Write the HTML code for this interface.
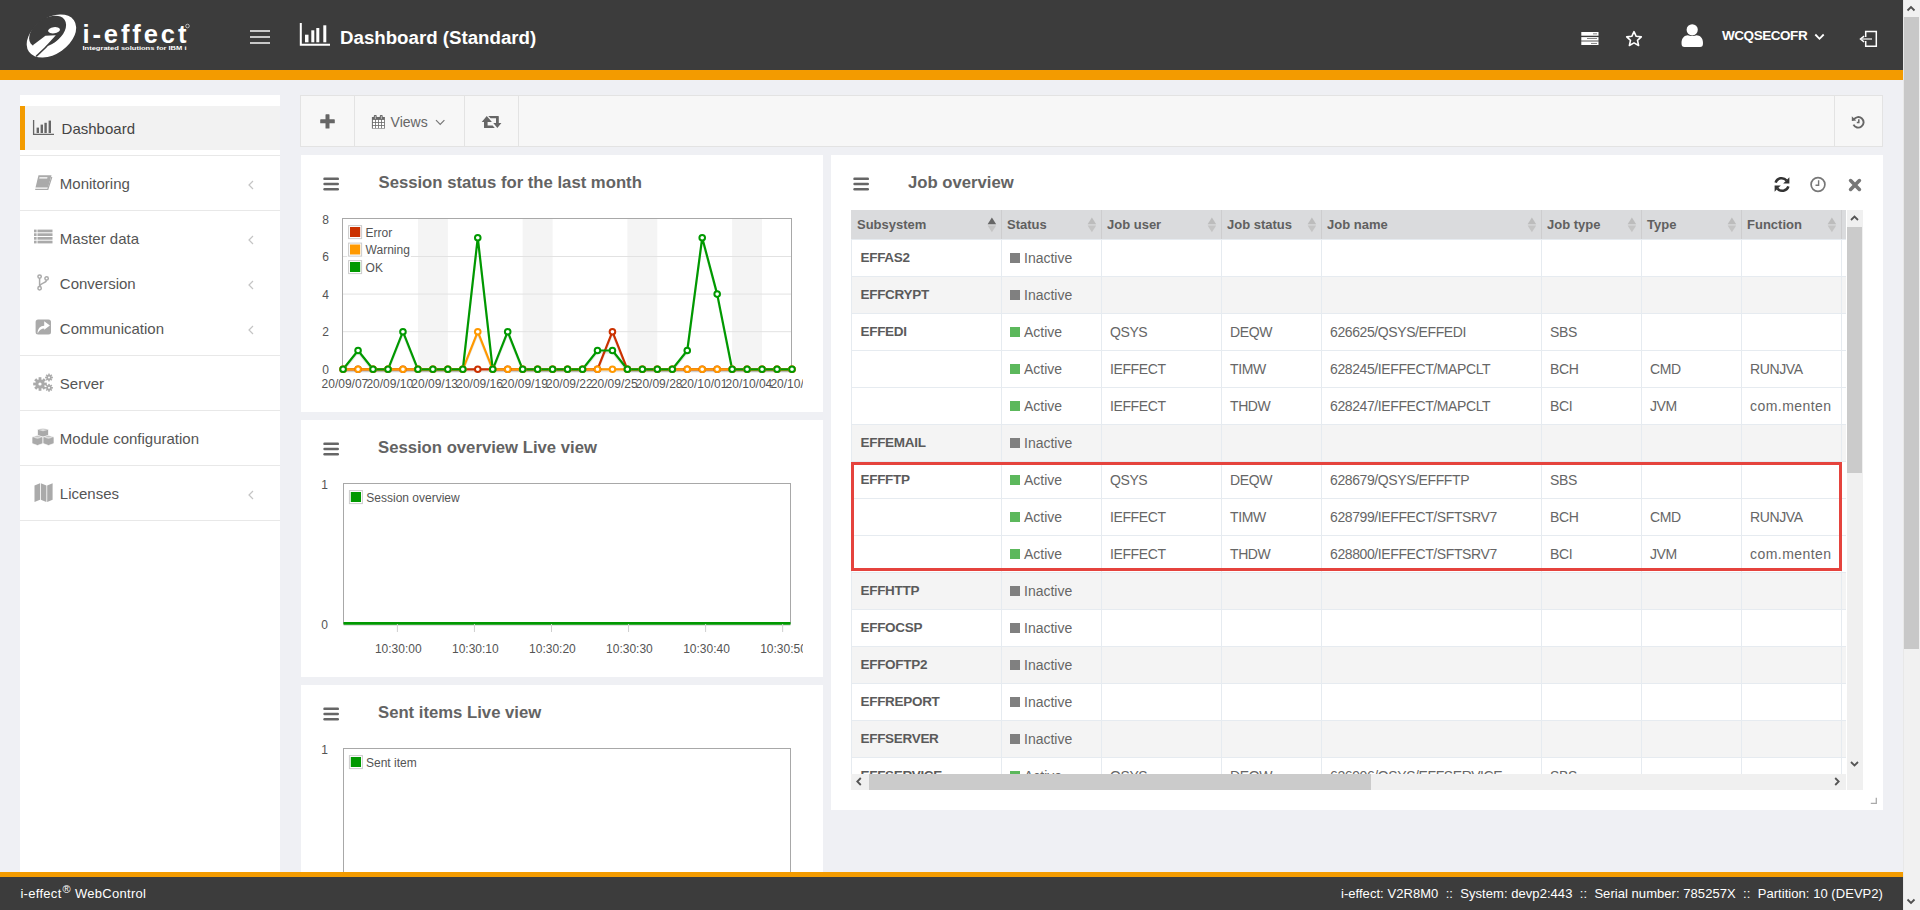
<!DOCTYPE html>
<html><head><meta charset="utf-8"><title>i-effect WebControl</title>
<style>
*{box-sizing:border-box;margin:0;padding:0}
html,body{width:1920px;height:910px;overflow:hidden}
body{background:#eff0f4;font-family:"Liberation Sans",sans-serif;position:relative;color:#555}
.a{position:absolute}
#hdr{left:0;top:0;width:1903px;height:70px;background:#3c3c3c}
#org{left:0;top:70px;width:1903px;height:10px;background:#f39b00}
#title{left:340px;top:28.6px;font-weight:bold;font-size:18.7px;line-height:1;color:#fff;white-space:nowrap}
#user{left:1722px;top:29.1px;font-weight:bold;font-size:13.5px;line-height:1;letter-spacing:-0.45px;color:#fff;white-space:nowrap}
#psb{left:1903px;top:0;width:17px;height:910px;background:#f1f1f1;border-left:1px solid #e8e8e8}
#psbt{left:1904px;top:17px;width:15px;height:632px;background:#c8c8c8}
#side{left:20px;top:95px;width:260px;height:800px;background:#fff}
.si{position:absolute;left:39.8px;font-size:15px;line-height:1;color:#555;white-space:nowrap}
.sep{position:absolute;left:0;width:260px;height:1px;background:#e8e8e8}
.chv{position:absolute;left:227px}
#tb{left:300px;top:95px;width:1583px;height:52px;background:#f7f7f7;border:1px solid #e3e3e3}
.tbd{position:absolute;top:0;width:1px;height:50px;background:#e3e3e3}
.pn{position:absolute;background:#fff}
.ptitle{position:absolute;font-weight:bold;font-size:16.7px;line-height:1;color:#636363;white-space:nowrap}
.ham{position:absolute;width:16px;height:13px}
.ham i{position:absolute;left:0;width:16px;height:2.5px;border-radius:1.2px;background:#666}
#forg{left:0;top:872px;width:1903px;height:5px;background:#f39b00}
#fdark{left:0;top:877px;width:1903px;height:33px;background:#3c3c3c}
#fl{left:20.4px;top:886.7px;font-size:13px;line-height:1;color:#fff;white-space:nowrap;letter-spacing:0.3px}
#fl sup{font-size:11px;vertical-align:0;position:relative;top:-5px;margin-left:1px}
#fr{right:37px;top:886.7px;font-size:13px;line-height:1;color:#fff;white-space:nowrap;letter-spacing:0.05px}
.th{position:absolute;top:8px;font-weight:bold;font-size:13px;line-height:1;color:#606060;white-space:nowrap}
.td{position:absolute;font-size:14px;line-height:1;color:#666;white-space:nowrap;letter-spacing:-0.4px}
.tds{position:absolute;font-size:13.5px;font-weight:bold;line-height:1;color:#5a5a5a;white-space:nowrap;letter-spacing:-0.3px}
</style></head><body>
<!-- HEADER -->
<div id="hdr" class="a"></div>
<div id="org" class="a"></div>
<svg class="a" style="left:22px;top:10px" width="60" height="52" viewBox="0 0 1050 910">
  <ellipse cx="515" cy="455" rx="480" ry="315" transform="rotate(-35 515 455)" fill="#fff"/>
  <ellipse cx="448" cy="378" rx="362" ry="226" transform="rotate(-35 448 378)" fill="#3c3c3c"/>
  <path d="M195 612 L410 452 L592 440 L262 800 L190 780 Z" fill="#fff"/>
  <path d="M248 812 L440 630" stroke="#3c3c3c" stroke-width="26"/>
  <ellipse cx="560" cy="355" rx="105" ry="54" transform="rotate(-8 560 355)" fill="#fff"/>
</svg>
<svg class="a" style="left:80px;top:18px" width="115" height="36">
  <text x="2.4" y="24.8" font-family="Liberation Sans" font-weight="bold" font-size="25.5" fill="#fff" textLength="104" lengthAdjust="spacing">i-effect</text>
  <text x="2.5" y="32.3" font-family="Liberation Sans" font-weight="bold" font-size="6.2" fill="#fff" textLength="104" lengthAdjust="spacingAndGlyphs">Integrated solutions for IBM i</text>
  <circle cx="107.5" cy="8" r="1.8" fill="none" stroke="#fff" stroke-width="0.6"/>
</svg>
<!-- hamburger -->
<div class="a" style="left:250px;top:30px;width:20px;height:2px;background:#c8c8c8"></div>
<div class="a" style="left:250px;top:36px;width:20px;height:2px;background:#c8c8c8"></div>
<div class="a" style="left:250px;top:42px;width:20px;height:2px;background:#c8c8c8"></div>
<!-- chart icon -->
<svg class="a" style="left:299px;top:22px" width="33" height="26" viewBox="0 0 33 26">
  <path d="M1.8 1 V22.8 H31" stroke="#fff" stroke-width="2" fill="none"/>
  <rect x="6" y="12.7" width="3.5" height="7.6" fill="#fff"/>
  <rect x="12.3" y="8.3" width="3" height="12" fill="#fff"/>
  <rect x="17.3" y="6" width="3" height="14.3" fill="#fff"/>
  <rect x="24.3" y="3.3" width="3" height="17" fill="#fff"/>
</svg>
<div id="title" class="a">Dashboard (Standard)</div>
<!-- server icon -->
<svg class="a" style="left:1581px;top:31px" width="19" height="15" viewBox="0 0 19 15">
  <rect x="0.3" y="1" width="17.2" height="3.7" fill="#fff"/>
  <rect x="0.3" y="6.1" width="17.2" height="2.9" fill="#fff"/>
  <rect x="0.3" y="9" width="17.2" height="1.8" fill="#aaa"/>
  <rect x="0.3" y="10.8" width="17.2" height="3.2" fill="#fff"/>
  <rect x="12" y="2.4" width="4" height="0.9" fill="#777"/>
  <rect x="6" y="7.1" width="10" height="0.9" fill="#777"/>
  <rect x="10" y="11.95" width="6" height="0.9" fill="#777"/>
</svg>
<!-- star -->
<svg class="a" style="left:1625px;top:30px" width="18" height="18" viewBox="0 0 18 18">
  <path d="M9 1.6 L11.2 6.3 L16.3 6.9 L12.5 10.3 L13.6 15.5 L9 12.9 L4.4 15.5 L5.5 10.3 L1.7 6.9 L6.8 6.3 Z" fill="none" stroke="#fff" stroke-width="1.6" stroke-linejoin="round"/>
</svg>
<!-- user -->
<svg class="a" style="left:1680px;top:23px" width="25" height="25" viewBox="0 0 25 25">
  <circle cx="12.2" cy="6.8" r="5.6" fill="#fff"/>
  <path d="M1.5 20 C1.5 14.5 4.8 12.4 7.8 12.2 C9.5 13.3 14.8 13.3 16.6 12.2 C19.8 12.4 23 14.5 23 20 C23 23 22 24 20 24 L4.5 24 C2.5 24 1.5 23 1.5 20 Z" fill="#fff"/>
</svg>
<div id="user" class="a">WCQSECOFR</div>
<svg class="a" style="left:1814px;top:33px" width="11" height="8" viewBox="0 0 11 8">
  <path d="M1.3 1.5 L5.5 5.8 L9.7 1.5" stroke="#fff" stroke-width="1.8" fill="none"/>
</svg>
<!-- sign-in icon -->
<svg class="a" style="left:1859px;top:30px" width="20" height="18" viewBox="0 0 20 18">
  <path d="M6.7 6.9 V1.6 H17.3 V16.3 H6.7 V11.1" stroke="#fff" stroke-width="1.5" fill="none"/>
  <path d="M3 9 H13" stroke="#ddd" stroke-width="1.4"/>
  <path d="M5.1 6.1 L1.5 9 L5.1 12" stroke="#fff" stroke-width="1.5" fill="none"/>
</svg>
<!-- SIDEBAR -->
<div id="side" class="a">
  <div class="a" style="left:0;top:11px;width:260px;height:44px;background:#f2f2f2"></div>
  <div class="a" style="left:0;top:11px;width:5px;height:44px;background:#f39b00"></div>
  <div class="sep" style="top:60px"></div>
  <div class="sep" style="top:115px"></div>
  <div class="sep" style="top:260px"></div>
  <div class="sep" style="top:315px"></div>
  <div class="sep" style="top:370px"></div>
  <div class="sep" style="top:425px"></div>
  <div class="si" style="top:26.1px;left:41.6px;color:#444">Dashboard</div>
  <div class="si" style="top:81.3px">Monitoring</div>
  <div class="si" style="top:136.3px">Master data</div>
  <div class="si" style="top:181.3px">Conversion</div>
  <div class="si" style="top:226.3px">Communication</div>
  <div class="si" style="top:281.3px">Server</div>
  <div class="si" style="top:336.3px">Module configuration</div>
  <div class="si" style="top:391.3px">Licenses</div>
  <svg class="chv" style="top:85px" width="8" height="10"><path d="M6 1 L2 5 L6 9" stroke="#c4c4c4" stroke-width="1.2" fill="none"/></svg>
  <svg class="chv" style="top:140px" width="8" height="10"><path d="M6 1 L2 5 L6 9" stroke="#c4c4c4" stroke-width="1.2" fill="none"/></svg>
  <svg class="chv" style="top:185px" width="8" height="10"><path d="M6 1 L2 5 L6 9" stroke="#c4c4c4" stroke-width="1.2" fill="none"/></svg>
  <svg class="chv" style="top:230px" width="8" height="10"><path d="M6 1 L2 5 L6 9" stroke="#c4c4c4" stroke-width="1.2" fill="none"/></svg>
  <svg class="chv" style="top:395px" width="8" height="10"><path d="M6 1 L2 5 L6 9" stroke="#c4c4c4" stroke-width="1.2" fill="none"/></svg>
</div>
<!-- sidebar icons -->
<svg class="a" style="left:32px;top:119px" width="23" height="17" viewBox="0 0 23 17">
  <path d="M1.6 1 V15.4 H22" stroke="#666" stroke-width="1.3" fill="none"/>
  <rect x="4.6" y="8.6" width="2.4" height="5.4" fill="#666"/>
  <rect x="8.6" y="5.6" width="2.4" height="8.4" fill="#666"/>
  <rect x="12.4" y="3.8" width="2.4" height="10.2" fill="#666"/>
  <rect x="16.6" y="1.6" width="2.4" height="12.4" fill="#666"/>
</svg>
<svg class="a" style="left:34px;top:174px" width="19" height="17" viewBox="0 0 19 17">
  <path d="M4.5 1.2 H17.5 L14 13.5 H1.5 L4.5 1.2 Z" fill="#aaa"/>
  <path d="M1.2 15.3 H13.8 L17.8 3" stroke="#aaa" stroke-width="1.2" fill="none"/>
  <rect x="6.3" y="3.3" width="8" height="1.1" fill="#fff" transform="skewX(-14)"/>
</svg>
<svg class="a" style="left:33px;top:229px" width="21" height="16" viewBox="0 0 21 16">
  <g fill="#aaa"><rect x="1" y="0.6" width="2.6" height="2.7"/><rect x="4.5" y="0.6" width="15" height="2.7"/>
  <rect x="1" y="4.3" width="2.6" height="2.7"/><rect x="4.5" y="4.3" width="15" height="2.7"/>
  <rect x="1" y="8" width="2.6" height="2.7"/><rect x="4.5" y="8" width="15" height="2.7"/>
  <rect x="1" y="11.7" width="2.6" height="2.7"/><rect x="4.5" y="11.7" width="15" height="2.7"/></g>
</svg>
<svg class="a" style="left:37px;top:274px" width="13" height="17" viewBox="0 0 13 17">
  <g stroke="#aaa" stroke-width="1.5" fill="none"><circle cx="2.6" cy="2.6" r="1.7"/><circle cx="9.6" cy="4.4" r="1.7"/><circle cx="2.6" cy="14.2" r="1.7"/>
  <path d="M2.6 4.3 V12.5"/><path d="M9.5 6.1 C9.3 9.4 3.2 8.8 2.8 12"/></g>
</svg>
<svg class="a" style="left:35px;top:319px" width="17" height="17" viewBox="0 0 17 17">
  <rect x="0.6" y="0.6" width="15.4" height="15" rx="2.5" fill="#aaa"/>
  <path d="M2.6 14.6 C2.6 9.6 5.2 6.8 9.2 6.8 V2.2 L14.9 6.4 L9.2 10.8 V9.4 C6.6 9.4 4.2 10.9 2.6 14.6 Z" fill="#fff"/>
</svg>
<svg class="a" style="left:33px;top:373px" width="21" height="19" viewBox="0 0 21 19">
  <g fill="#aaa">
    <circle cx="7" cy="11" r="4.6"/>
    <g transform="translate(7 11)"><rect x="-1.4" y="-6.8" width="2.8" height="13.6"/><rect x="-6.8" y="-1.4" width="13.6" height="2.8"/><rect x="-1.4" y="-6.8" width="2.8" height="13.6" transform="rotate(45)"/><rect x="-1.4" y="-6.8" width="2.8" height="13.6" transform="rotate(-45)"/></g>
    <g transform="translate(16 4.5)"><circle r="2.6"/><rect x="-0.8" y="-3.9" width="1.6" height="7.8"/><rect x="-3.9" y="-0.8" width="7.8" height="1.6"/><rect x="-0.8" y="-3.9" width="1.6" height="7.8" transform="rotate(45)"/><rect x="-0.8" y="-3.9" width="1.6" height="7.8" transform="rotate(-45)"/></g>
    <g transform="translate(16 14.8)"><circle r="2.6"/><rect x="-0.8" y="-3.9" width="1.6" height="7.8"/><rect x="-3.9" y="-0.8" width="7.8" height="1.6"/><rect x="-0.8" y="-3.9" width="1.6" height="7.8" transform="rotate(45)"/><rect x="-0.8" y="-3.9" width="1.6" height="7.8" transform="rotate(-45)"/></g>
  </g>
  <circle cx="7" cy="11" r="1.6" fill="#fff"/><circle cx="16" cy="4.5" r="1" fill="#fff"/><circle cx="16" cy="14.8" r="1" fill="#fff"/>
</svg>
<svg class="a" style="left:31px;top:428px" width="24" height="20" viewBox="0 0 24 20">
  <g fill="#aaa" stroke="#fff" stroke-width="0.7">
    <path d="M6.5 1.5 L12 0.3 L17.5 1.5 V7.5 L12 9.2 L6.5 7.5 Z"/>
    <path d="M1 9 L6.5 7.6 L12 9 V15.5 L6.5 17.5 L1 15.5 Z"/>
    <path d="M12 9 L17.5 7.6 L23 9 V15.5 L17.5 17.5 L12 15.5 Z"/>
  </g>
  <g fill="#ddd"><path d="M7.5 2 L12 1 L16.5 2 L12 3.3 Z"/><path d="M2 9.5 L6.5 8.5 L11 9.5 L6.5 10.8 Z"/><path d="M13 9.5 L17.5 8.5 L22 9.5 L17.5 10.8 Z"/></g>
</svg>
<svg class="a" style="left:34px;top:482px" width="20" height="21" viewBox="0 0 20 21">
  <g fill="#aaa"><path d="M0.5 3.5 L6 1.2 V17.8 L0.5 20 Z"/><path d="M6.8 1.2 L12.4 3.5 V20 L6.8 17.8 Z"/><path d="M13.2 3.5 L18.6 1.2 V17.8 L13.2 20 Z"/></g>
</svg>
<!-- TOOLBAR -->
<div id="tb" class="a">
  <div class="tbd" style="left:53px"></div>
  <div class="tbd" style="left:163px"></div>
  <div class="tbd" style="left:217px"></div>
  <div class="tbd" style="left:1533px"></div>
</div>
<svg class="a" style="left:320px;top:113.5px" width="15" height="15" viewBox="0 0 15 15">
  <rect x="5.5" y="0.3" width="4" height="14.2" rx="0.6" fill="#666"/><rect x="0.2" y="5.3" width="14.6" height="4" rx="0.6" fill="#666"/>
</svg>
<svg class="a" style="left:371px;top:114px" width="15" height="16" viewBox="0 0 15 16">
  <rect x="0.9" y="3" width="13" height="11.6" fill="#6a6a6a"/>
  <rect x="2.8" y="1" width="2.9" height="4.2" rx="0.9" fill="#6a6a6a"/>
  <rect x="8.8" y="1" width="2.9" height="4.2" rx="0.9" fill="#6a6a6a"/>
  <rect x="3.9" y="2" width="0.8" height="3" fill="#ccc"/><rect x="9.9" y="2" width="0.8" height="3" fill="#ccc"/>
  <g fill="#fff"><rect x="1.9" y="5.9" width="2.2" height="2.2"/><rect x="4.9" y="5.9" width="2.2" height="2.2"/><rect x="7.9" y="5.9" width="2.2" height="2.2"/><rect x="10.9" y="5.9" width="2.2" height="2.2"/><rect x="1.9" y="8.9" width="2.2" height="2.2"/><rect x="4.9" y="8.9" width="2.2" height="2.2"/><rect x="7.9" y="8.9" width="2.2" height="2.2"/><rect x="10.9" y="8.9" width="2.2" height="2.2"/><rect x="1.9" y="11.9" width="2.2" height="2.2"/><rect x="4.9" y="11.9" width="2.2" height="2.2"/><rect x="7.9" y="11.9" width="2.2" height="2.2"/><rect x="10.9" y="11.9" width="2.2" height="2.2"/></g>
</svg>
<div class="a" style="left:390.6px;top:115.1px;font-size:14px;line-height:1;color:#666;white-space:nowrap">Views</div>
<svg class="a" style="left:435px;top:119px" width="11" height="7" viewBox="0 0 11 7"><path d="M1 1.2 L5.2 5.4 L9.4 1.2" stroke="#777" stroke-width="1.2" fill="none"/></svg>
<svg class="a" style="left:481px;top:115px" width="21" height="14" viewBox="0 0 21 14">
  <path d="M0.7 7 L5.75 0.9 L10.9 7 H6.6 V10.6 H11.6 L13.8 13 H3.6 C3.2 13 3 12.8 3 12.4 V7 Z" fill="#666"/>
  <path d="M20.4 8.1 L16.35 13 L12.3 8.1 H15 V3.3 H9.6 L7.2 0.9 H17.3 C17.6 0.9 17.8 1.1 17.8 1.4 V8.1 Z" fill="#666"/>
</svg>
<svg class="a" style="left:1851px;top:115px" width="15" height="14" viewBox="0 0 15 14">
  <path d="M2.8 4.5 A5.3 5.3 0 1 1 2.5 9.6" stroke="#666" stroke-width="1.9" fill="none"/>
  <path d="M0.8 1.3 L5.2 5.4 L0.8 5.9 Z" fill="#666"/>
  <path d="M7.8 4.2 V7.6 H5.8" stroke="#666" stroke-width="1.5" fill="none"/>
</svg>

<!-- PANELS -->
<div class="pn" style="left:301px;top:155px;width:522px;height:257px"></div>
<div class="pn" style="left:301px;top:420px;width:522px;height:257px"></div>
<div class="pn" style="left:301px;top:685px;width:522px;height:200px"></div>
<div class="pn" style="left:831px;top:155px;width:1052px;height:655px"></div>
<svg class="a" style="left:323px;top:177px" width="17" height="14" viewBox="0 0 17 14"><g fill="#666"><rect x="0.3" y="0.5" width="15.7" height="2.6" rx="1.2"/><rect x="0.3" y="5.7" width="15.7" height="2.6" rx="1.2"/><rect x="0.3" y="10.9" width="15.7" height="2.6" rx="1.2"/></g></svg>
<svg class="a" style="left:323px;top:442px" width="17" height="14" viewBox="0 0 17 14"><g fill="#666"><rect x="0.3" y="0.5" width="15.7" height="2.6" rx="1.2"/><rect x="0.3" y="5.7" width="15.7" height="2.6" rx="1.2"/><rect x="0.3" y="10.9" width="15.7" height="2.6" rx="1.2"/></g></svg>
<svg class="a" style="left:323px;top:707px" width="17" height="14" viewBox="0 0 17 14"><g fill="#666"><rect x="0.3" y="0.5" width="15.7" height="2.6" rx="1.2"/><rect x="0.3" y="5.7" width="15.7" height="2.6" rx="1.2"/><rect x="0.3" y="10.9" width="15.7" height="2.6" rx="1.2"/></g></svg>
<svg class="a" style="left:853px;top:177px" width="17" height="14" viewBox="0 0 17 14"><g fill="#666"><rect x="0.3" y="0.5" width="15.7" height="2.6" rx="1.2"/><rect x="0.3" y="5.7" width="15.7" height="2.6" rx="1.2"/><rect x="0.3" y="10.9" width="15.7" height="2.6" rx="1.2"/></g></svg>
<div class="ptitle" style="left:378.5px;top:174.8px">Session status for the last month</div>
<div class="ptitle" style="left:378px;top:439.8px">Session overview Live view</div>
<div class="ptitle" style="left:378px;top:704.8px">Sent items Live view</div>
<div class="ptitle" style="left:908px;top:174.8px">Job overview</div>
<!-- job overview icons -->
<svg class="a" style="left:1773px;top:176px" width="18" height="17" viewBox="0 0 18 17">
  <path d="M2.6 6.6 A6.3 6.3 0 0 1 13.6 4.6" stroke="#333" stroke-width="2.5" fill="none"/>
  <path d="M16.4 1.3 V7.5 H10.2 Z" fill="#333"/>
  <path d="M15.4 10.4 A6.3 6.3 0 0 1 4.4 12.4" stroke="#333" stroke-width="2.5" fill="none"/>
  <path d="M1.6 15.7 V9.5 H7.8 Z" fill="#333"/>
</svg>
<svg class="a" style="left:1809px;top:176px" width="18" height="17" viewBox="0 0 18 17">
  <circle cx="9" cy="8.5" r="6.9" stroke="#777" stroke-width="1.7" fill="none"/>
  <path d="M9.6 4.2 V9.3 H6.5" stroke="#777" stroke-width="1.4" fill="none"/>
</svg>
<svg class="a" style="left:1848px;top:178px" width="14" height="14" viewBox="0 0 14 14">
  <path d="M2.6 2.6 L11.4 11.4 M11.4 2.6 L2.6 11.4" stroke="#777" stroke-width="3.6" stroke-linecap="round"/>
</svg>

<!-- FOOTER -->
<div id="forg" class="a"></div>
<div id="fdark" class="a"></div>
<div id="fl" class="a">i-effect<sup>®</sup> WebControl</div>
<div id="fr" class="a">i-effect: V2R8M0 &nbsp;::&nbsp; System: devp2:443 &nbsp;::&nbsp; Serial number: 785257X &nbsp;::&nbsp; Partition: 10 (DEVP2)</div>
<!-- page scrollbar -->
<div id="psb" class="a"></div>
<div id="psbt" class="a"></div>
<svg class="a" style="left:1905px;top:4px" width="12" height="9"><path d="M2.5 6.5 L6 3 L9.5 6.5" stroke="#505050" stroke-width="1.8" fill="none"/></svg>
<svg class="a" style="left:1905px;top:897px" width="12" height="9"><path d="M2.5 2.5 L6 6 L9.5 2.5" stroke="#505050" stroke-width="1.8" fill="none"/></svg>
<svg class="a" style="left:301px;top:195px" width="502" height="210" viewBox="301 195 502 210">
<rect x="417.92" y="218.5" width="29.93" height="150.5" fill="#f4f4f4"/>
<rect x="522.66" y="218.5" width="29.93" height="150.5" fill="#f4f4f4"/>
<rect x="627.40" y="218.5" width="29.93" height="150.5" fill="#f4f4f4"/>
<rect x="732.15" y="218.5" width="29.93" height="150.5" fill="#f4f4f4"/>
<line x1="342.5" y1="331.70" x2="791.5" y2="331.70" stroke="#e2e2e2" stroke-width="1"/>
<line x1="342.5" y1="294.10" x2="791.5" y2="294.10" stroke="#e2e2e2" stroke-width="1"/>
<line x1="342.5" y1="256.50" x2="791.5" y2="256.50" stroke="#e2e2e2" stroke-width="1"/>
<rect x="342.5" y="218.5" width="449" height="150.5" fill="none" stroke="#a8a8a8" stroke-width="1"/>
<text x="329" y="373.90" text-anchor="end" font-family="Liberation Sans" font-size="12" fill="#545454">0</text>
<text x="329" y="336.30" text-anchor="end" font-family="Liberation Sans" font-size="12" fill="#545454">2</text>
<text x="329" y="298.70" text-anchor="end" font-family="Liberation Sans" font-size="12" fill="#545454">4</text>
<text x="329" y="261.10" text-anchor="end" font-family="Liberation Sans" font-size="12" fill="#545454">6</text>
<text x="329" y="223.50" text-anchor="end" font-family="Liberation Sans" font-size="12" fill="#545454">8</text>
<text x="344.90" y="387.6" text-anchor="middle" font-family="Liberation Sans" font-size="12" fill="#545454">20/09/07</text>
<text x="389.79" y="387.6" text-anchor="middle" font-family="Liberation Sans" font-size="12" fill="#545454">20/09/10</text>
<text x="434.68" y="387.6" text-anchor="middle" font-family="Liberation Sans" font-size="12" fill="#545454">20/09/13</text>
<text x="479.57" y="387.6" text-anchor="middle" font-family="Liberation Sans" font-size="12" fill="#545454">20/09/16</text>
<text x="524.46" y="387.6" text-anchor="middle" font-family="Liberation Sans" font-size="12" fill="#545454">20/09/19</text>
<text x="569.35" y="387.6" text-anchor="middle" font-family="Liberation Sans" font-size="12" fill="#545454">20/09/22</text>
<text x="614.24" y="387.6" text-anchor="middle" font-family="Liberation Sans" font-size="12" fill="#545454">20/09/25</text>
<text x="659.13" y="387.6" text-anchor="middle" font-family="Liberation Sans" font-size="12" fill="#545454">20/09/28</text>
<text x="704.02" y="387.6" text-anchor="middle" font-family="Liberation Sans" font-size="12" fill="#545454">20/10/01</text>
<text x="748.91" y="387.6" text-anchor="middle" font-family="Liberation Sans" font-size="12" fill="#545454">20/10/04</text>
<text x="793.80" y="387.6" text-anchor="middle" font-family="Liberation Sans" font-size="12" fill="#545454">20/10/07</text>
<polyline points="343.10,371.30 358.06,371.30 373.03,371.30 387.99,371.30 402.95,371.30 417.92,371.30 432.88,371.30 447.84,371.30 462.81,371.30 477.77,371.30 492.73,371.30 507.70,371.30 522.66,371.30 537.62,371.30 552.59,371.30 567.55,371.30 582.51,371.30 597.48,371.30 612.44,333.70 627.40,371.30 642.37,371.30 657.33,371.30 672.29,371.30 687.26,371.30 702.22,371.30 717.18,371.30 732.15,371.30 747.11,371.30 762.07,371.30 777.04,371.30 792.00,371.30" fill="none" stroke="rgba(0,0,0,0.1)" stroke-width="2"/>
<polyline points="343.10,371.30 358.06,371.30 373.03,371.30 387.99,371.30 402.95,371.30 417.92,371.30 432.88,371.30 447.84,371.30 462.81,371.30 477.77,333.70 492.73,371.30 507.70,371.30 522.66,371.30 537.62,371.30 552.59,371.30 567.55,371.30 582.51,371.30 597.48,371.30 612.44,371.30 627.40,371.30 642.37,371.30 657.33,371.30 672.29,371.30 687.26,371.30 702.22,371.30 717.18,371.30 732.15,371.30 747.11,371.30 762.07,371.30 777.04,371.30 792.00,371.30" fill="none" stroke="rgba(0,0,0,0.1)" stroke-width="2"/>
<polyline points="343.10,371.30 358.06,352.50 373.03,371.30 387.99,371.30 402.95,333.70 417.92,371.30 432.88,371.30 447.84,371.30 462.81,371.30 477.77,239.70 492.73,371.30 507.70,333.70 522.66,371.30 537.62,371.30 552.59,371.30 567.55,371.30 582.51,371.30 597.48,352.50 612.44,352.50 627.40,371.30 642.37,371.30 657.33,371.30 672.29,371.30 687.26,352.50 702.22,239.70 717.18,296.10 732.15,371.30 747.11,371.30 762.07,371.30 777.04,371.30 792.00,371.30" fill="none" stroke="rgba(0,0,0,0.1)" stroke-width="2"/>
<polyline points="343.10,369.30 358.06,369.30 373.03,369.30 387.99,369.30 402.95,369.30 417.92,369.30 432.88,369.30 447.84,369.30 462.81,369.30 477.77,369.30 492.73,369.30 507.70,369.30 522.66,369.30 537.62,369.30 552.59,369.30 567.55,369.30 582.51,369.30 597.48,369.30 612.44,331.70 627.40,369.30 642.37,369.30 657.33,369.30 672.29,369.30 687.26,369.30 702.22,369.30 717.18,369.30 732.15,369.30 747.11,369.30 762.07,369.30 777.04,369.30 792.00,369.30" fill="none" stroke="#cb3100" stroke-width="2.2" stroke-linejoin="round"/>
<polyline points="343.10,369.30 358.06,369.30 373.03,369.30 387.99,369.30 402.95,369.30 417.92,369.30 432.88,369.30 447.84,369.30 462.81,369.30 477.77,331.70 492.73,369.30 507.70,369.30 522.66,369.30 537.62,369.30 552.59,369.30 567.55,369.30 582.51,369.30 597.48,369.30 612.44,369.30 627.40,369.30 642.37,369.30 657.33,369.30 672.29,369.30 687.26,369.30 702.22,369.30 717.18,369.30 732.15,369.30 747.11,369.30 762.07,369.30 777.04,369.30 792.00,369.30" fill="none" stroke="#ff9900" stroke-width="2.2" stroke-linejoin="round"/>
<polyline points="343.10,369.30 358.06,350.50 373.03,369.30 387.99,369.30 402.95,331.70 417.92,369.30 432.88,369.30 447.84,369.30 462.81,369.30 477.77,237.70 492.73,369.30 507.70,331.70 522.66,369.30 537.62,369.30 552.59,369.30 567.55,369.30 582.51,369.30 597.48,350.50 612.44,350.50 627.40,369.30 642.37,369.30 657.33,369.30 672.29,369.30 687.26,350.50 702.22,237.70 717.18,294.10 732.15,369.30 747.11,369.30 762.07,369.30 777.04,369.30 792.00,369.30" fill="none" stroke="#009900" stroke-width="2.2" stroke-linejoin="round"/>
<circle cx="343.10" cy="369.30" r="2.8" fill="#fff" stroke="#cb3100" stroke-width="2"/>
<circle cx="358.06" cy="369.30" r="2.8" fill="#fff" stroke="#cb3100" stroke-width="2"/>
<circle cx="373.03" cy="369.30" r="2.8" fill="#fff" stroke="#cb3100" stroke-width="2"/>
<circle cx="387.99" cy="369.30" r="2.8" fill="#fff" stroke="#cb3100" stroke-width="2"/>
<circle cx="402.95" cy="369.30" r="2.8" fill="#fff" stroke="#cb3100" stroke-width="2"/>
<circle cx="417.92" cy="369.30" r="2.8" fill="#fff" stroke="#cb3100" stroke-width="2"/>
<circle cx="432.88" cy="369.30" r="2.8" fill="#fff" stroke="#cb3100" stroke-width="2"/>
<circle cx="447.84" cy="369.30" r="2.8" fill="#fff" stroke="#cb3100" stroke-width="2"/>
<circle cx="462.81" cy="369.30" r="2.8" fill="#fff" stroke="#cb3100" stroke-width="2"/>
<circle cx="477.77" cy="369.30" r="2.8" fill="#fff" stroke="#cb3100" stroke-width="2"/>
<circle cx="492.73" cy="369.30" r="2.8" fill="#fff" stroke="#cb3100" stroke-width="2"/>
<circle cx="507.70" cy="369.30" r="2.8" fill="#fff" stroke="#cb3100" stroke-width="2"/>
<circle cx="522.66" cy="369.30" r="2.8" fill="#fff" stroke="#cb3100" stroke-width="2"/>
<circle cx="537.62" cy="369.30" r="2.8" fill="#fff" stroke="#cb3100" stroke-width="2"/>
<circle cx="552.59" cy="369.30" r="2.8" fill="#fff" stroke="#cb3100" stroke-width="2"/>
<circle cx="567.55" cy="369.30" r="2.8" fill="#fff" stroke="#cb3100" stroke-width="2"/>
<circle cx="582.51" cy="369.30" r="2.8" fill="#fff" stroke="#cb3100" stroke-width="2"/>
<circle cx="597.48" cy="369.30" r="2.8" fill="#fff" stroke="#cb3100" stroke-width="2"/>
<circle cx="612.44" cy="331.70" r="2.8" fill="#fff" stroke="#cb3100" stroke-width="2"/>
<circle cx="627.40" cy="369.30" r="2.8" fill="#fff" stroke="#cb3100" stroke-width="2"/>
<circle cx="642.37" cy="369.30" r="2.8" fill="#fff" stroke="#cb3100" stroke-width="2"/>
<circle cx="657.33" cy="369.30" r="2.8" fill="#fff" stroke="#cb3100" stroke-width="2"/>
<circle cx="672.29" cy="369.30" r="2.8" fill="#fff" stroke="#cb3100" stroke-width="2"/>
<circle cx="687.26" cy="369.30" r="2.8" fill="#fff" stroke="#cb3100" stroke-width="2"/>
<circle cx="702.22" cy="369.30" r="2.8" fill="#fff" stroke="#cb3100" stroke-width="2"/>
<circle cx="717.18" cy="369.30" r="2.8" fill="#fff" stroke="#cb3100" stroke-width="2"/>
<circle cx="732.15" cy="369.30" r="2.8" fill="#fff" stroke="#cb3100" stroke-width="2"/>
<circle cx="747.11" cy="369.30" r="2.8" fill="#fff" stroke="#cb3100" stroke-width="2"/>
<circle cx="762.07" cy="369.30" r="2.8" fill="#fff" stroke="#cb3100" stroke-width="2"/>
<circle cx="777.04" cy="369.30" r="2.8" fill="#fff" stroke="#cb3100" stroke-width="2"/>
<circle cx="792.00" cy="369.30" r="2.8" fill="#fff" stroke="#cb3100" stroke-width="2"/>
<circle cx="343.10" cy="369.30" r="2.8" fill="#fff" stroke="#ff9900" stroke-width="2"/>
<circle cx="358.06" cy="369.30" r="2.8" fill="#fff" stroke="#ff9900" stroke-width="2"/>
<circle cx="373.03" cy="369.30" r="2.8" fill="#fff" stroke="#ff9900" stroke-width="2"/>
<circle cx="387.99" cy="369.30" r="2.8" fill="#fff" stroke="#ff9900" stroke-width="2"/>
<circle cx="402.95" cy="369.30" r="2.8" fill="#fff" stroke="#ff9900" stroke-width="2"/>
<circle cx="417.92" cy="369.30" r="2.8" fill="#fff" stroke="#ff9900" stroke-width="2"/>
<circle cx="432.88" cy="369.30" r="2.8" fill="#fff" stroke="#ff9900" stroke-width="2"/>
<circle cx="447.84" cy="369.30" r="2.8" fill="#fff" stroke="#ff9900" stroke-width="2"/>
<circle cx="462.81" cy="369.30" r="2.8" fill="#fff" stroke="#ff9900" stroke-width="2"/>
<circle cx="477.77" cy="331.70" r="2.8" fill="#fff" stroke="#ff9900" stroke-width="2"/>
<circle cx="492.73" cy="369.30" r="2.8" fill="#fff" stroke="#ff9900" stroke-width="2"/>
<circle cx="507.70" cy="369.30" r="2.8" fill="#fff" stroke="#ff9900" stroke-width="2"/>
<circle cx="522.66" cy="369.30" r="2.8" fill="#fff" stroke="#ff9900" stroke-width="2"/>
<circle cx="537.62" cy="369.30" r="2.8" fill="#fff" stroke="#ff9900" stroke-width="2"/>
<circle cx="552.59" cy="369.30" r="2.8" fill="#fff" stroke="#ff9900" stroke-width="2"/>
<circle cx="567.55" cy="369.30" r="2.8" fill="#fff" stroke="#ff9900" stroke-width="2"/>
<circle cx="582.51" cy="369.30" r="2.8" fill="#fff" stroke="#ff9900" stroke-width="2"/>
<circle cx="597.48" cy="369.30" r="2.8" fill="#fff" stroke="#ff9900" stroke-width="2"/>
<circle cx="612.44" cy="369.30" r="2.8" fill="#fff" stroke="#ff9900" stroke-width="2"/>
<circle cx="627.40" cy="369.30" r="2.8" fill="#fff" stroke="#ff9900" stroke-width="2"/>
<circle cx="642.37" cy="369.30" r="2.8" fill="#fff" stroke="#ff9900" stroke-width="2"/>
<circle cx="657.33" cy="369.30" r="2.8" fill="#fff" stroke="#ff9900" stroke-width="2"/>
<circle cx="672.29" cy="369.30" r="2.8" fill="#fff" stroke="#ff9900" stroke-width="2"/>
<circle cx="687.26" cy="369.30" r="2.8" fill="#fff" stroke="#ff9900" stroke-width="2"/>
<circle cx="702.22" cy="369.30" r="2.8" fill="#fff" stroke="#ff9900" stroke-width="2"/>
<circle cx="717.18" cy="369.30" r="2.8" fill="#fff" stroke="#ff9900" stroke-width="2"/>
<circle cx="732.15" cy="369.30" r="2.8" fill="#fff" stroke="#ff9900" stroke-width="2"/>
<circle cx="747.11" cy="369.30" r="2.8" fill="#fff" stroke="#ff9900" stroke-width="2"/>
<circle cx="762.07" cy="369.30" r="2.8" fill="#fff" stroke="#ff9900" stroke-width="2"/>
<circle cx="777.04" cy="369.30" r="2.8" fill="#fff" stroke="#ff9900" stroke-width="2"/>
<circle cx="792.00" cy="369.30" r="2.8" fill="#fff" stroke="#ff9900" stroke-width="2"/>
<circle cx="343.10" cy="369.30" r="2.8" fill="#fff" stroke="#009900" stroke-width="2"/>
<circle cx="358.06" cy="350.50" r="2.8" fill="#fff" stroke="#009900" stroke-width="2"/>
<circle cx="373.03" cy="369.30" r="2.8" fill="#fff" stroke="#009900" stroke-width="2"/>
<circle cx="387.99" cy="369.30" r="2.8" fill="#fff" stroke="#009900" stroke-width="2"/>
<circle cx="402.95" cy="331.70" r="2.8" fill="#fff" stroke="#009900" stroke-width="2"/>
<circle cx="417.92" cy="369.30" r="2.8" fill="#fff" stroke="#009900" stroke-width="2"/>
<circle cx="432.88" cy="369.30" r="2.8" fill="#fff" stroke="#009900" stroke-width="2"/>
<circle cx="447.84" cy="369.30" r="2.8" fill="#fff" stroke="#009900" stroke-width="2"/>
<circle cx="462.81" cy="369.30" r="2.8" fill="#fff" stroke="#009900" stroke-width="2"/>
<circle cx="477.77" cy="237.70" r="2.8" fill="#fff" stroke="#009900" stroke-width="2"/>
<circle cx="492.73" cy="369.30" r="2.8" fill="#fff" stroke="#009900" stroke-width="2"/>
<circle cx="507.70" cy="331.70" r="2.8" fill="#fff" stroke="#009900" stroke-width="2"/>
<circle cx="522.66" cy="369.30" r="2.8" fill="#fff" stroke="#009900" stroke-width="2"/>
<circle cx="537.62" cy="369.30" r="2.8" fill="#fff" stroke="#009900" stroke-width="2"/>
<circle cx="552.59" cy="369.30" r="2.8" fill="#fff" stroke="#009900" stroke-width="2"/>
<circle cx="567.55" cy="369.30" r="2.8" fill="#fff" stroke="#009900" stroke-width="2"/>
<circle cx="582.51" cy="369.30" r="2.8" fill="#fff" stroke="#009900" stroke-width="2"/>
<circle cx="597.48" cy="350.50" r="2.8" fill="#fff" stroke="#009900" stroke-width="2"/>
<circle cx="612.44" cy="350.50" r="2.8" fill="#fff" stroke="#009900" stroke-width="2"/>
<circle cx="627.40" cy="369.30" r="2.8" fill="#fff" stroke="#009900" stroke-width="2"/>
<circle cx="642.37" cy="369.30" r="2.8" fill="#fff" stroke="#009900" stroke-width="2"/>
<circle cx="657.33" cy="369.30" r="2.8" fill="#fff" stroke="#009900" stroke-width="2"/>
<circle cx="672.29" cy="369.30" r="2.8" fill="#fff" stroke="#009900" stroke-width="2"/>
<circle cx="687.26" cy="350.50" r="2.8" fill="#fff" stroke="#009900" stroke-width="2"/>
<circle cx="702.22" cy="237.70" r="2.8" fill="#fff" stroke="#009900" stroke-width="2"/>
<circle cx="717.18" cy="294.10" r="2.8" fill="#fff" stroke="#009900" stroke-width="2"/>
<circle cx="732.15" cy="369.30" r="2.8" fill="#fff" stroke="#009900" stroke-width="2"/>
<circle cx="747.11" cy="369.30" r="2.8" fill="#fff" stroke="#009900" stroke-width="2"/>
<circle cx="762.07" cy="369.30" r="2.8" fill="#fff" stroke="#009900" stroke-width="2"/>
<circle cx="777.04" cy="369.30" r="2.8" fill="#fff" stroke="#009900" stroke-width="2"/>
<circle cx="792.00" cy="369.30" r="2.8" fill="#fff" stroke="#009900" stroke-width="2"/>
<rect x="347" y="223.5" width="64" height="49" fill="#fff" fill-opacity="0.85"/>
<rect x="348.6" y="225.60" width="13" height="13" fill="#fff" stroke="#ccc" stroke-width="1"/>
<rect x="350" y="227.00" width="10.2" height="10" fill="#cb3100"/>
<text x="365.6" y="236.90" font-family="Liberation Sans" font-size="12" fill="#545454">Error</text>
<rect x="348.6" y="243.10" width="13" height="13" fill="#fff" stroke="#ccc" stroke-width="1"/>
<rect x="350" y="244.50" width="10.2" height="10" fill="#ff9900"/>
<text x="365.6" y="254.40" font-family="Liberation Sans" font-size="12" fill="#545454">Warning</text>
<rect x="348.6" y="260.60" width="13" height="13" fill="#fff" stroke="#ccc" stroke-width="1"/>
<rect x="350" y="262.00" width="10.2" height="10" fill="#009900"/>
<text x="365.6" y="271.90" font-family="Liberation Sans" font-size="12" fill="#545454">OK</text>
</svg>
<svg class="a" style="left:301px;top:460px" width="502" height="210" viewBox="301 460 502 210">
<rect x="343.5" y="483.5" width="447" height="140" fill="none" stroke="#a8a8a8" stroke-width="1"/>
<line x1="343.5" y1="625" x2="790.5" y2="625" stroke="rgba(0,0,0,0.12)" stroke-width="2"/>
<line x1="343.5" y1="623.4" x2="790.5" y2="623.4" stroke="#009900" stroke-width="2.6"/>
<line x1="397.40" y1="624" x2="397.40" y2="632" stroke="#cfcfcf" stroke-width="1"/>
<text x="398.30" y="652.8" text-anchor="middle" font-family="Liberation Sans" font-size="12" fill="#545454">10:30:00</text>
<line x1="474.45" y1="624" x2="474.45" y2="632" stroke="#cfcfcf" stroke-width="1"/>
<text x="475.35" y="652.8" text-anchor="middle" font-family="Liberation Sans" font-size="12" fill="#545454">10:30:10</text>
<line x1="551.50" y1="624" x2="551.50" y2="632" stroke="#cfcfcf" stroke-width="1"/>
<text x="552.40" y="652.8" text-anchor="middle" font-family="Liberation Sans" font-size="12" fill="#545454">10:30:20</text>
<line x1="628.55" y1="624" x2="628.55" y2="632" stroke="#cfcfcf" stroke-width="1"/>
<text x="629.45" y="652.8" text-anchor="middle" font-family="Liberation Sans" font-size="12" fill="#545454">10:30:30</text>
<line x1="705.60" y1="624" x2="705.60" y2="632" stroke="#cfcfcf" stroke-width="1"/>
<text x="706.50" y="652.8" text-anchor="middle" font-family="Liberation Sans" font-size="12" fill="#545454">10:30:40</text>
<line x1="782.65" y1="624" x2="782.65" y2="632" stroke="#cfcfcf" stroke-width="1"/>
<text x="783.55" y="652.8" text-anchor="middle" font-family="Liberation Sans" font-size="12" fill="#545454">10:30:50</text>
<text x="328" y="489" text-anchor="end" font-family="Liberation Sans" font-size="12" fill="#545454">1</text>
<text x="328" y="628.8" text-anchor="end" font-family="Liberation Sans" font-size="12" fill="#545454">0</text>
<rect x="349.4" y="490.6" width="13" height="13" fill="#fff" stroke="#ccc" stroke-width="1"/>
<rect x="350.8" y="492" width="10.2" height="10" fill="#009900"/>
<text x="366.3" y="502.3" font-family="Liberation Sans" font-size="12" fill="#545454">Session overview</text>
</svg>
<svg class="a" style="left:301px;top:725px" width="502" height="147" viewBox="301 725 502 147">
<rect x="343.5" y="748.5" width="447" height="200" fill="none" stroke="#a8a8a8" stroke-width="1"/>
<text x="328" y="753.5" text-anchor="end" font-family="Liberation Sans" font-size="12" fill="#545454">1</text>
<rect x="349.4" y="755.6" width="13" height="13" fill="#fff" stroke="#ccc" stroke-width="1"/>
<rect x="350.8" y="757" width="10.2" height="10" fill="#009900"/>
<text x="366" y="767.2" font-family="Liberation Sans" font-size="12" fill="#545454">Sent item</text>
</svg>
<div class="a" style="left:851px;top:210px;width:995px;height:563.5px;overflow:hidden">
<div class="a" style="left:0;top:0;width:995px;height:29px;background:#dadbdd"></div>
<div class="th" style="left:6px">Subsystem</div>
<svg class="a" style="left:135.5px;top:6.5px" width="10" height="16"><path d="M0.6 7.2 L4.9 0.6 L9.2 7.2Z" fill="#666"/><path d="M0.6 8.6 L4.9 15.2 L9.2 8.6Z" fill="#c4c4c4"/></svg>
<div class="th" style="left:156px">Status</div>
<svg class="a" style="left:235.5px;top:6.5px" width="10" height="16"><path d="M0.6 7.2 L4.9 0.6 L9.2 7.2Z" fill="#bcbcbc"/><path d="M0.6 8.6 L4.9 15.2 L9.2 8.6Z" fill="#c4c4c4"/></svg>
<div class="th" style="left:256px">Job user</div>
<svg class="a" style="left:355.5px;top:6.5px" width="10" height="16"><path d="M0.6 7.2 L4.9 0.6 L9.2 7.2Z" fill="#bcbcbc"/><path d="M0.6 8.6 L4.9 15.2 L9.2 8.6Z" fill="#c4c4c4"/></svg>
<div class="th" style="left:376px">Job status</div>
<svg class="a" style="left:455.5px;top:6.5px" width="10" height="16"><path d="M0.6 7.2 L4.9 0.6 L9.2 7.2Z" fill="#bcbcbc"/><path d="M0.6 8.6 L4.9 15.2 L9.2 8.6Z" fill="#c4c4c4"/></svg>
<div class="th" style="left:476px">Job name</div>
<svg class="a" style="left:675.5px;top:6.5px" width="10" height="16"><path d="M0.6 7.2 L4.9 0.6 L9.2 7.2Z" fill="#bcbcbc"/><path d="M0.6 8.6 L4.9 15.2 L9.2 8.6Z" fill="#c4c4c4"/></svg>
<div class="th" style="left:696px">Job type</div>
<svg class="a" style="left:775.5px;top:6.5px" width="10" height="16"><path d="M0.6 7.2 L4.9 0.6 L9.2 7.2Z" fill="#bcbcbc"/><path d="M0.6 8.6 L4.9 15.2 L9.2 8.6Z" fill="#c4c4c4"/></svg>
<div class="th" style="left:796px">Type</div>
<svg class="a" style="left:875.5px;top:6.5px" width="10" height="16"><path d="M0.6 7.2 L4.9 0.6 L9.2 7.2Z" fill="#bcbcbc"/><path d="M0.6 8.6 L4.9 15.2 L9.2 8.6Z" fill="#c4c4c4"/></svg>
<div class="th" style="left:896px">Function</div>
<svg class="a" style="left:975.5px;top:6.5px" width="10" height="16"><path d="M0.6 7.2 L4.9 0.6 L9.2 7.2Z" fill="#bcbcbc"/><path d="M0.6 8.6 L4.9 15.2 L9.2 8.6Z" fill="#c4c4c4"/></svg>
<div class="a" style="left:150px;top:0;width:1px;height:29px;background:#cdcdcf"></div>
<div class="a" style="left:250px;top:0;width:1px;height:29px;background:#cdcdcf"></div>
<div class="a" style="left:370px;top:0;width:1px;height:29px;background:#cdcdcf"></div>
<div class="a" style="left:470px;top:0;width:1px;height:29px;background:#cdcdcf"></div>
<div class="a" style="left:690px;top:0;width:1px;height:29px;background:#cdcdcf"></div>
<div class="a" style="left:790px;top:0;width:1px;height:29px;background:#cdcdcf"></div>
<div class="a" style="left:890px;top:0;width:1px;height:29px;background:#cdcdcf"></div>
<div class="a" style="left:990px;top:0;width:1px;height:29px;background:#cdcdcf"></div>
<div class="a" style="left:0;top:29px;width:995px;height:37px;background:#fff;border-top:1px solid #e6ebf0"></div>
<div class="tds" style="left:9.5px;top:41.0px">EFFAS2</div>
<div class="a" style="left:158.5px;top:43px;width:10px;height:10px;background:#808080"></div>
<div class="td" style="left:173px;top:40.9px;letter-spacing:0">Inactive</div>
<div class="a" style="left:0;top:66px;width:995px;height:37px;background:#f4f4f4;border-top:1px solid #e6ebf0"></div>
<div class="tds" style="left:9.5px;top:78.0px">EFFCRYPT</div>
<div class="a" style="left:158.5px;top:80px;width:10px;height:10px;background:#808080"></div>
<div class="td" style="left:173px;top:77.9px;letter-spacing:0">Inactive</div>
<div class="a" style="left:0;top:103px;width:995px;height:37px;background:#fff;border-top:1px solid #e6ebf0"></div>
<div class="tds" style="left:9.5px;top:115.0px">EFFEDI</div>
<div class="a" style="left:158.5px;top:117px;width:10px;height:10px;background:#5cb85c"></div>
<div class="td" style="left:173px;top:114.9px;letter-spacing:0">Active</div>
<div class="td" style="left:259px;top:114.9px">QSYS</div>
<div class="td" style="left:379px;top:114.9px">DEQW</div>
<div class="td" style="left:479px;top:114.9px">626625/QSYS/EFFEDI</div>
<div class="td" style="left:699px;top:114.9px">SBS</div>
<div class="a" style="left:0;top:140px;width:995px;height:37px;background:#fff;border-top:1px solid #e6ebf0"></div>
<div class="a" style="left:158.5px;top:154px;width:10px;height:10px;background:#5cb85c"></div>
<div class="td" style="left:173px;top:151.9px;letter-spacing:0">Active</div>
<div class="td" style="left:259px;top:151.9px">IEFFECT</div>
<div class="td" style="left:379px;top:151.9px">TIMW</div>
<div class="td" style="left:479px;top:151.9px">628245/IEFFECT/MAPCLT</div>
<div class="td" style="left:699px;top:151.9px">BCH</div>
<div class="td" style="left:799px;top:151.9px">CMD</div>
<div class="td" style="left:899px;top:151.9px">RUNJVA</div>
<div class="a" style="left:0;top:177px;width:995px;height:37px;background:#fff;border-top:1px solid #e6ebf0"></div>
<div class="a" style="left:158.5px;top:191px;width:10px;height:10px;background:#5cb85c"></div>
<div class="td" style="left:173px;top:188.9px;letter-spacing:0">Active</div>
<div class="td" style="left:259px;top:188.9px">IEFFECT</div>
<div class="td" style="left:379px;top:188.9px">THDW</div>
<div class="td" style="left:479px;top:188.9px">628247/IEFFECT/MAPCLT</div>
<div class="td" style="left:699px;top:188.9px">BCI</div>
<div class="td" style="left:799px;top:188.9px">JVM</div>
<div class="td" style="left:899px;top:188.9px;letter-spacing:0.45px">com.menten</div>
<div class="a" style="left:0;top:214px;width:995px;height:37px;background:#f4f4f4;border-top:1px solid #e6ebf0"></div>
<div class="tds" style="left:9.5px;top:226.0px">EFFEMAIL</div>
<div class="a" style="left:158.5px;top:228px;width:10px;height:10px;background:#808080"></div>
<div class="td" style="left:173px;top:225.9px;letter-spacing:0">Inactive</div>
<div class="a" style="left:0;top:251px;width:995px;height:37px;background:#fff;border-top:1px solid #e6ebf0"></div>
<div class="tds" style="left:9.5px;top:263.0px">EFFFTP</div>
<div class="a" style="left:158.5px;top:265px;width:10px;height:10px;background:#5cb85c"></div>
<div class="td" style="left:173px;top:262.9px;letter-spacing:0">Active</div>
<div class="td" style="left:259px;top:262.9px">QSYS</div>
<div class="td" style="left:379px;top:262.9px">DEQW</div>
<div class="td" style="left:479px;top:262.9px">628679/QSYS/EFFFTP</div>
<div class="td" style="left:699px;top:262.9px">SBS</div>
<div class="a" style="left:0;top:288px;width:995px;height:37px;background:#fff;border-top:1px solid #e6ebf0"></div>
<div class="a" style="left:158.5px;top:302px;width:10px;height:10px;background:#5cb85c"></div>
<div class="td" style="left:173px;top:299.9px;letter-spacing:0">Active</div>
<div class="td" style="left:259px;top:299.9px">IEFFECT</div>
<div class="td" style="left:379px;top:299.9px">TIMW</div>
<div class="td" style="left:479px;top:299.9px">628799/IEFFECT/SFTSRV7</div>
<div class="td" style="left:699px;top:299.9px">BCH</div>
<div class="td" style="left:799px;top:299.9px">CMD</div>
<div class="td" style="left:899px;top:299.9px">RUNJVA</div>
<div class="a" style="left:0;top:325px;width:995px;height:37px;background:#fff;border-top:1px solid #e6ebf0"></div>
<div class="a" style="left:158.5px;top:339px;width:10px;height:10px;background:#5cb85c"></div>
<div class="td" style="left:173px;top:336.9px;letter-spacing:0">Active</div>
<div class="td" style="left:259px;top:336.9px">IEFFECT</div>
<div class="td" style="left:379px;top:336.9px">THDW</div>
<div class="td" style="left:479px;top:336.9px">628800/IEFFECT/SFTSRV7</div>
<div class="td" style="left:699px;top:336.9px">BCI</div>
<div class="td" style="left:799px;top:336.9px">JVM</div>
<div class="td" style="left:899px;top:336.9px;letter-spacing:0.45px">com.menten</div>
<div class="a" style="left:0;top:362px;width:995px;height:37px;background:#f4f4f4;border-top:1px solid #e6ebf0"></div>
<div class="tds" style="left:9.5px;top:374.0px">EFFHTTP</div>
<div class="a" style="left:158.5px;top:376px;width:10px;height:10px;background:#808080"></div>
<div class="td" style="left:173px;top:373.9px;letter-spacing:0">Inactive</div>
<div class="a" style="left:0;top:399px;width:995px;height:37px;background:#fff;border-top:1px solid #e6ebf0"></div>
<div class="tds" style="left:9.5px;top:411.0px">EFFOCSP</div>
<div class="a" style="left:158.5px;top:413px;width:10px;height:10px;background:#808080"></div>
<div class="td" style="left:173px;top:410.9px;letter-spacing:0">Inactive</div>
<div class="a" style="left:0;top:436px;width:995px;height:37px;background:#f4f4f4;border-top:1px solid #e6ebf0"></div>
<div class="tds" style="left:9.5px;top:448.0px">EFFOFTP2</div>
<div class="a" style="left:158.5px;top:450px;width:10px;height:10px;background:#808080"></div>
<div class="td" style="left:173px;top:447.9px;letter-spacing:0">Inactive</div>
<div class="a" style="left:0;top:473px;width:995px;height:37px;background:#fff;border-top:1px solid #e6ebf0"></div>
<div class="tds" style="left:9.5px;top:485.0px">EFFREPORT</div>
<div class="a" style="left:158.5px;top:487px;width:10px;height:10px;background:#808080"></div>
<div class="td" style="left:173px;top:484.9px;letter-spacing:0">Inactive</div>
<div class="a" style="left:0;top:510px;width:995px;height:37px;background:#f4f4f4;border-top:1px solid #e6ebf0"></div>
<div class="tds" style="left:9.5px;top:522.0px">EFFSERVER</div>
<div class="a" style="left:158.5px;top:524px;width:10px;height:10px;background:#808080"></div>
<div class="td" style="left:173px;top:521.9px;letter-spacing:0">Inactive</div>
<div class="a" style="left:0;top:547px;width:995px;height:37px;background:#fff;border-top:1px solid #e6ebf0"></div>
<div class="tds" style="left:9.5px;top:559.0px">EFFSERVICE</div>
<div class="a" style="left:158.5px;top:561px;width:10px;height:10px;background:#5cb85c"></div>
<div class="td" style="left:173px;top:558.9px;letter-spacing:0">Active</div>
<div class="td" style="left:259px;top:558.9px">QSYS</div>
<div class="td" style="left:379px;top:558.9px">DEQW</div>
<div class="td" style="left:479px;top:558.9px">626906/QSYS/EFFSERVICE</div>
<div class="td" style="left:699px;top:558.9px">SBS</div>
<div class="a" style="left:0px;top:29px;width:1px;height:560px;background:#e6ebf0"></div>
<div class="a" style="left:150px;top:29px;width:1px;height:560px;background:#e6ebf0"></div>
<div class="a" style="left:250px;top:29px;width:1px;height:560px;background:#e6ebf0"></div>
<div class="a" style="left:370px;top:29px;width:1px;height:560px;background:#e6ebf0"></div>
<div class="a" style="left:470px;top:29px;width:1px;height:560px;background:#e6ebf0"></div>
<div class="a" style="left:690px;top:29px;width:1px;height:560px;background:#e6ebf0"></div>
<div class="a" style="left:790px;top:29px;width:1px;height:560px;background:#e6ebf0"></div>
<div class="a" style="left:890px;top:29px;width:1px;height:560px;background:#e6ebf0"></div>
<div class="a" style="left:990px;top:29px;width:1px;height:560px;background:#e6ebf0"></div>
</div>
<div class="a" style="left:851px;top:462px;width:991px;height:109px;border:3px solid #e5433d"></div>
<div class="a" style="left:851px;top:773.5px;width:995px;height:16.5px;background:#f0f0f0"></div>
<div class="a" style="left:869px;top:774px;width:502px;height:15.5px;background:#cbcbcb"></div>
<svg class="a" style="left:854px;top:776px" width="10" height="11"><path d="M6.8 2 L3.3 5.5 L6.8 9" stroke="#555" stroke-width="1.8" fill="none"/></svg>
<svg class="a" style="left:1832px;top:776px" width="10" height="11"><path d="M3.2 2 L6.7 5.5 L3.2 9" stroke="#555" stroke-width="1.8" fill="none"/></svg>
<div class="a" style="left:1847px;top:210px;width:15.5px;height:580px;background:#f0f0f0"></div>
<div class="a" style="left:1847px;top:227px;width:15px;height:245.5px;background:#cbcbcb"></div>
<svg class="a" style="left:1849px;top:213px" width="11" height="10"><path d="M2 7 L5.5 3.5 L9 7" stroke="#555" stroke-width="1.8" fill="none"/></svg>
<svg class="a" style="left:1849px;top:759px" width="11" height="10"><path d="M2 3 L5.5 6.5 L9 3" stroke="#555" stroke-width="1.8" fill="none"/></svg>
<svg class="a" style="left:1870px;top:797px" width="8" height="8"><path d="M0.8 6.3 H6.3 V0.8" stroke="#aaa" stroke-width="1.3" fill="none"/></svg>
</body></html>
